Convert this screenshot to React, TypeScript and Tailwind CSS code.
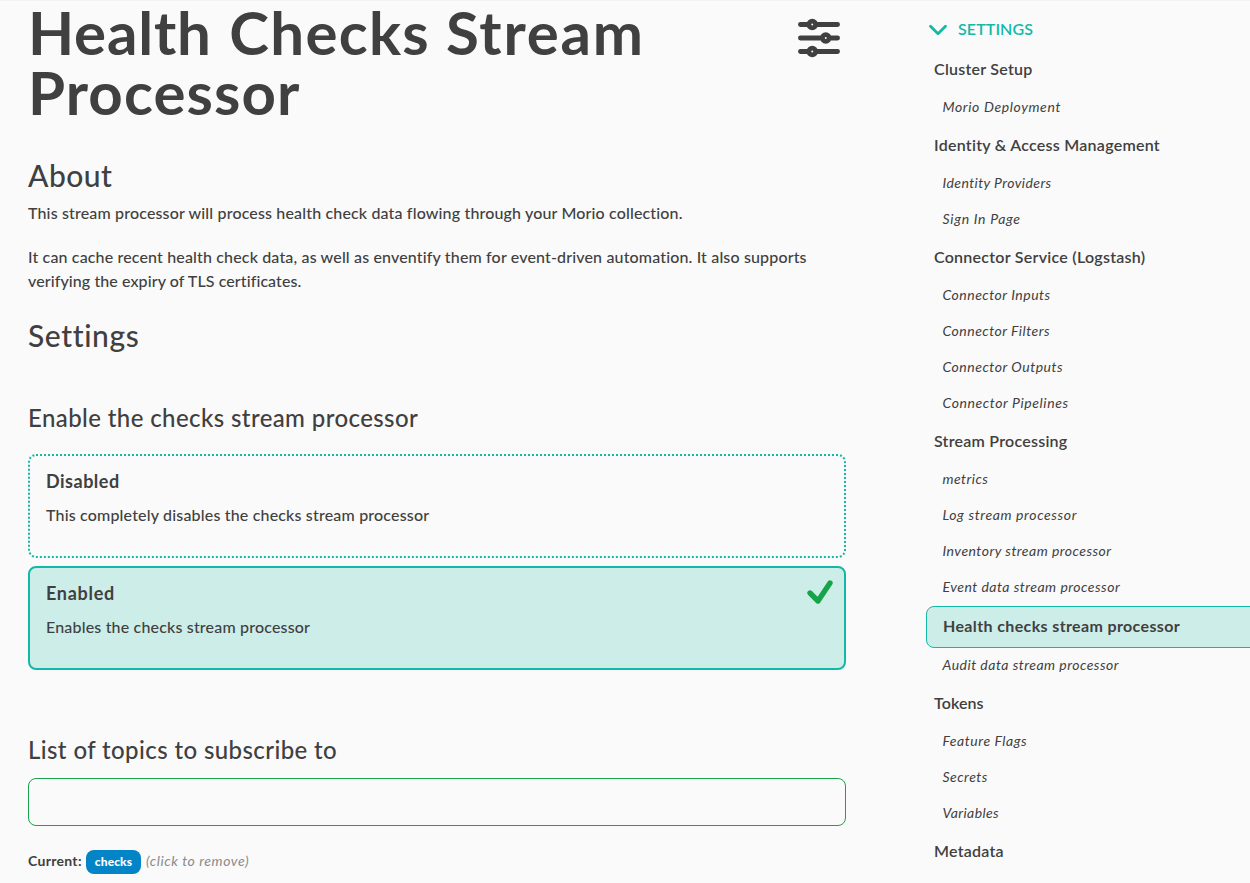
type IconProps = { className: string; strokeWidth: number; d: string };

const Icon = ({ className, strokeWidth, d }: IconProps) => (
  <svg
    className={className}
    viewBox="0 0 24 24"
    fill="none"
    stroke="currentColor"
    strokeWidth={strokeWidth}
    strokeLinecap="round"
    strokeLinejoin="round"
    aria-hidden="true"
  >
    <path d={d} />
  </svg>
);

const slidersPath =
  "M10.5 6h9.75M10.5 6a1.5 1.5 0 1 1-3 0m3 0a1.5 1.5 0 1 0-3 0M3.75 6H7.5m3 12h9.75m-9.75 0a1.5 1.5 0 0 1-3 0m3 0a1.5 1.5 0 0 0-3 0m-3.75 0H7.5m9-6h3.75m-3.75 0a1.5 1.5 0 0 1-3 0m3 0a1.5 1.5 0 0 0-3 0m-9.75 0h9.75";
const checkPath = "m4.5 12.75 6 6 9-13.5";
const chevronPath = "m19.5 8.25-7.5 7.5-7.5-7.5";

type Entry = { label: string; tracking: string; active?: boolean };
type Group = Entry & { items: Entry[] };

const groups: Group[] = [
  {
    label: "Cluster Setup",
    tracking: "tracking-[0.25px]",
    items: [{ label: "Morio Deployment", tracking: "tracking-[0.62px]" }],
  },
  {
    label: "Identity & Access Management",
    tracking: "tracking-[0.26px]",
    items: [
      { label: "Identity Providers", tracking: "tracking-[0.42px]" },
      { label: "Sign In Page", tracking: "tracking-[0.7px]" },
    ],
  },
  {
    label: "Connector Service (Logstash)",
    tracking: "tracking-[0.26px]",
    items: [
      { label: "Connector Inputs", tracking: "tracking-[0.51px]" },
      { label: "Connector Filters", tracking: "tracking-[0.5px]" },
      { label: "Connector Outputs", tracking: "tracking-[0.53px]" },
      { label: "Connector Pipelines", tracking: "tracking-[0.6px]" },
    ],
  },
  {
    label: "Stream Processing",
    tracking: "tracking-[0.24px]",
    items: [
      { label: "metrics", tracking: "tracking-[0.45px]" },
      { label: "Log stream processor", tracking: "tracking-[0.63px]" },
      { label: "Inventory stream processor", tracking: "tracking-[0.48px]" },
      { label: "Event data stream processor", tracking: "tracking-[0.49px]" },
      { label: "Health checks stream processor", tracking: "tracking-[0.37px]", active: true },
      { label: "Audit data stream processor", tracking: "tracking-[0.49px]" },
    ],
  },
  {
    label: "Tokens",
    tracking: "tracking-[0.1px]",
    items: [
      { label: "Feature Flags", tracking: "tracking-[0.56px]" },
      { label: "Secrets", tracking: "tracking-[0.5px]" },
      { label: "Variables", tracking: "tracking-[0.4px]" },
    ],
  },
  { label: "Metadata", tracking: "tracking-[0.25px]", items: [] },
];

const MenuItem = ({ label, tracking, active }: Entry) =>
  active ? (
    <li className="-mr-4 flex h-[42px] items-center rounded-lg border border-[#14b8a6] bg-[#cdede9] pb-0.5 pl-4 font-bold">
      <span className={tracking}>{label}</span>
    </li>
  ) : (
    <li className="flex h-9 items-center pb-0.5 pl-[16.5px] text-sm italic">
      <span className={tracking}>{label}</span>
    </li>
  );

const Sidebar = () => (
  <nav className="w-[324px] shrink-0 pt-[9px]">
    <div className="flex h-10 items-center gap-2 text-[#14b8a6]">
      <Icon className="size-6" strokeWidth={2.75} d={chevronPath} />
      <span className="pb-0.5 font-semibold tracking-[0.1px]">SETTINGS</span>
    </div>
    <ul>
      {groups.map((group) => (
        <li key={group.label}>
          <div className="flex h-10 items-center pb-0.5 pl-2 font-semibold">
            <span className={group.tracking}>{group.label}</span>
          </div>
          <ul>
            {group.items.map((item) => (
              <MenuItem key={item.label} {...item} />
            ))}
          </ul>
        </li>
      ))}
    </ul>
  </nav>
);

export default function App() {
  return (
    <div className="flex h-[883px] w-[1250px] justify-between overflow-hidden border-t border-[#f3f3f3] bg-[#fafafa] pl-7 font-['Lato','Liberation_Sans',sans-serif] text-base text-[#404040]">
      <main className="flex w-[818px] flex-col pt-px">
        <div className="flex items-start justify-between">
          <h1 className="text-[60px] leading-[60px] font-bold">
            <span className="block">
              <span className="tracking-[0.8px] [word-spacing:2.2px]">Health </span>
              <span className="tracking-[1.3px]">Checks </span>
              <span className="tracking-[1.8px]">Stream</span>
            </span>
            <span className="block tracking-[1.1px]">Processor</span>
          </h1>
          <Icon className="mt-[9px] size-[54px]" strokeWidth={2.15} d={slidersPath} />
        </div>

        <h2 className="mt-[35px] text-[30px] leading-9 font-medium tracking-[0.5px]">About</h2>
        <p className="mt-2 font-medium tracking-[0.155px]">
          This stream processor will process health check data flowing through your Morio collection.
        </p>
        <p className="mt-5 font-medium whitespace-nowrap">
          <span className="block tracking-[0.15px]">
            It can cache recent health check data, as well as enventify them for event-driven automation. It also
            supports
          </span>
          <span className="block tracking-[0.09px]">verifying the expiry of TLS certificates.</span>
        </p>

        <h2 className="mt-6 text-[30px] leading-9 font-medium tracking-[0.6px]">Settings</h2>

        <h3 className="mt-[49px] text-2xl font-medium tracking-[0.4px]">Enable the checks stream processor</h3>
        <div className="mt-5 flex flex-col gap-2">
          <button className="h-[104px] rounded-lg border-2 border-dotted border-[#14b8a6] px-4 pt-[11px] text-left align-top">
            <div className="h-full">
              <div className="text-lg leading-7 font-bold tracking-[0.5px]">Disabled</div>
              <div className="mt-2 font-medium tracking-[0.175px]">
                This completely disables the checks stream processor
              </div>
            </div>
          </button>
          <button className="flex h-[104px] items-start justify-between rounded-lg border-2 border-[#14b8a6] bg-[#cdede9] pr-2 pl-4 text-left">
            <div className="pt-[11px]">
              <div className="text-lg leading-7 font-bold tracking-[0.7px]">Enabled</div>
              <div className="mt-2 font-medium tracking-[0.174px]">Enables the checks stream processor</div>
            </div>
            <Icon className="mt-2 size-8 text-[#16a34a]" strokeWidth={4} d={checkPath} />
          </button>
        </div>

        <h3 className="mt-16 text-2xl font-medium tracking-[0.4px]">List of topics to subscribe to</h3>
        <input
          type="text"
          aria-label="Topic"
          className="mt-3 h-12 shrink-0 rounded-lg border border-[#16a34a] bg-transparent px-4 outline-none"
        />
        <div className="mt-6 flex h-6 items-center text-sm">
          <span className="w-[58px] pb-0.5 font-bold tracking-[0.3px]">Current:</span>
          <button className="h-6 w-[55px] rounded-lg bg-[#0284c7] text-xs font-black tracking-[0.1px] text-white">
            checks
          </button>
          <span className="pb-0.5 pl-[5px] tracking-[0.57px] text-[#8a8a8a] italic">(click to remove)</span>
        </div>
      </main>
      <Sidebar />
    </div>
  );
}
